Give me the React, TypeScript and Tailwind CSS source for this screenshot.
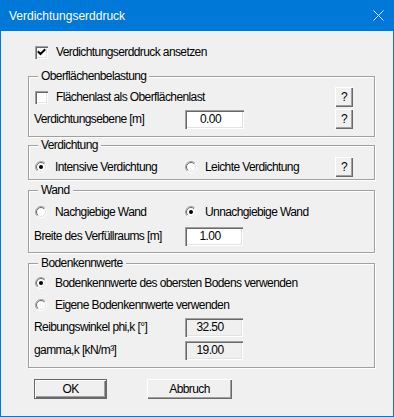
import React, { useId } from "react";

const txt = "font-['Liberation_Sans',Arial,sans-serif] text-[12px] leading-[14px] tracking-[-0.6px] text-black whitespace-nowrap";

function CheckBox({ checked }: { checked?: boolean }) {
  return (
    <div className="w-[13px] h-[13px] bg-white shrink-0 shadow-[inset_1px_1px_0_#a0a0a0,inset_2px_2px_0_#696969,inset_-1px_-1px_0_#ffffff,inset_-2px_-2px_0_#e3e3e3] flex items-center justify-center">
      {checked && (
        <svg width="13" height="13" viewBox="0 0 13 13">
          <path d="M3.5 6 L5.5 8 L9.5 4" fill="none" stroke="#000" strokeWidth="2" strokeLinecap="square" />
        </svg>
      )}
    </div>
  );
}

function Radio({ checked }: { checked?: boolean }) {
  const id = useId().replace(/:/g, "");
  return (
    <svg width="12" height="12" viewBox="0 0 12 12" className="shrink-0">
      <defs>
        <linearGradient id={`o${id}`} x1="0" y1="0" x2="1" y2="1">
          <stop offset="0.5" stopColor="#a0a0a0" />
          <stop offset="0.5" stopColor="#ffffff" />
        </linearGradient>
        <linearGradient id={`i${id}`} x1="0" y1="0" x2="1" y2="1">
          <stop offset="0.5" stopColor="#696969" />
          <stop offset="0.5" stopColor="#e3e3e3" />
        </linearGradient>
      </defs>
      <circle cx="6" cy="6" r="5.5" fill="none" stroke={`url(#o${id})`} strokeWidth="1" />
      <circle cx="6" cy="6" r="4.5" fill="#fff" stroke={`url(#i${id})`} strokeWidth="1" />
      {checked && <circle cx="6" cy="6" r="2" fill="#000" />}
    </svg>
  );
}

function Edit({ value, disabled, w = "w-[58px]" }: { value: string; disabled?: boolean; w?: string }) {
  return (
    <div
      className={`${w} h-[19px] shrink-0 flex items-center justify-center pr-[8px] shadow-[inset_1px_1px_0_#a0a0a0,inset_2px_2px_0_#696969,inset_-1px_-1px_0_#ffffff,inset_-2px_-2px_0_#e3e3e3] ${
        disabled ? "bg-[#f0f0f0]" : "bg-white"
      }`}
    >
      <span className={`${txt} ${disabled ? "text-[#6d6d6d]" : ""}`}>{value}</span>
    </div>
  );
}

function Btn({ label, w, isDefault }: { label: string; w: string; isDefault?: boolean }) {
  return (
    <div
      className={`${w} h-[20px] shrink-0 flex items-center justify-center bg-[#f0f0f0] ${
        isDefault
          ? "border border-[#696969] shadow-[inset_1px_1px_0_#ffffff,inset_-1px_-1px_0_#696969,inset_-2px_-2px_0_#a0a0a0]"
          : "shadow-[inset_1px_1px_0_#ffffff,inset_-1px_-1px_0_#696969,inset_-2px_-2px_0_#a0a0a0]"
      }`}
    >
      <span className={txt}>{label}</span>
    </div>
  );
}

function Group({ title, h, className = "", children }: { title: string; h: string; className?: string; children: React.ReactNode }) {
  return (
    <div
      className={`relative w-[347px] ${h} border border-[#a0a0a0] shadow-[inset_1px_1px_0_#ffffff,1px_1px_0_#ffffff] pl-[5px] pr-[21px] flex flex-col ${className}`}
    >
      <span className={`${txt} absolute left-[9px] -top-[8px] px-[3px] bg-[#f0f0f0]`}>{title}</span>
      {children}
    </div>
  );
}

export default function App() {
  return (
    <div className="w-[394px] h-[417px] flex flex-col overflow-hidden">
      <div className="h-[31px] shrink-0 bg-[#0078d7] flex items-center justify-between pl-[9px] pr-[10px]">
        <span className="font-['Liberation_Sans',Arial,sans-serif] text-[12px] leading-[14px] text-white">Verdichtungserddruck</span>
        <svg width="11" height="11" viewBox="0 0 11 11">
          <path d="M0.5 0.5 L10.5 10.5 M10.5 0.5 L0.5 10.5" stroke="#fff" strokeWidth="1" />
        </svg>
      </div>
      <div className="flex-1 bg-[#f0f0f0] border-x border-b border-[#0078d7] pl-[27px] flex flex-col">
        <div className="h-[20px] mt-[11px] flex items-center pl-[7px] gap-[8px]">
          <CheckBox checked />
          <span className={txt}>Verdichtungserddruck ansetzen</span>
        </div>

        <Group title="Oberflächenbelastung" h="h-[61px]" className="mt-[14px] pt-[10px]">
          <div className="h-[20px] flex items-center">
            <div className="flex-1 flex items-center gap-[8px] pl-[1px]">
              <CheckBox />
              <span className={txt}>Flächenlast als Oberflächenlast</span>
            </div>
            <Btn label="?" w="w-[18px]" />
          </div>
          <div className="h-[20px] mt-[2px] flex items-center">
            <span className={`${txt} w-[151px]`}>Verdichtungsebene [m]</span>
            <Edit value="0.00" w="w-[59px]" />
            <div className="flex-1" />
            <Btn label="?" w="w-[18px]" />
          </div>
        </Group>

        <Group title="Verdichtung" h="h-[35px]" className="mt-[8px] pt-[11px]">
          <div className="h-[19px] flex items-center">
            <div className="w-[151px] flex items-center gap-[8px] pl-[1px]">
              <Radio checked />
              <span className={txt}>Intensive Verdichtung</span>
            </div>
            <div className="flex-1 flex items-center gap-[8px]">
              <Radio />
              <span className={txt}>Leichte Verdichtung</span>
            </div>
            <Btn label="?" w="w-[18px]" />
          </div>
        </Group>

        <Group title="Wand" h="h-[63px]" className="mt-[10px] pt-[11px]">
          <div className="h-[20px] flex items-center">
            <div className="w-[151px] flex items-center gap-[8px] pl-[1px]">
              <Radio />
              <span className={txt}>Nachgiebige Wand</span>
            </div>
            <div className="flex-1 flex items-center gap-[8px]">
              <Radio checked />
              <span className={txt}>Unnachgiebige Wand</span>
            </div>
          </div>
          <div className="h-[20px] mt-[4px] flex items-center">
            <span className={`${txt} w-[151px]`}>Breite des Verfüllraums [m]</span>
            <Edit value="1.00" />
          </div>
        </Group>

        <Group title="Bodenkennwerte" h="h-[105px]" className="mt-[10px] pt-[9px]">
          <div className="h-[20px] flex items-center gap-[8px] pl-[1px]">
            <Radio checked />
            <span className={txt}>Bodenkennwerte des obersten Bodens verwenden</span>
          </div>
          <div className="h-[20px] mt-[2px] flex items-center gap-[8px] pl-[1px]">
            <Radio />
            <span className={txt}>Eigene Bodenkennwerte verwenden</span>
          </div>
          <div className="h-[20px] mt-[2px] flex items-center">
            <span className={`${txt} w-[151px]`}>Reibungswinkel phi,k [°]</span>
            <Edit value="32.50" disabled />
          </div>
          <div className="h-[20px] mt-[3px] flex items-center">
            <span className={`${txt} w-[151px]`}>gamma,k [kN/m³]</span>
            <Edit value="19.00" disabled />
          </div>
        </Group>

        <div className="mt-[11px] flex items-center pl-[6px]">
          <Btn label="OK" w="w-[73px]" isDefault />
          <div className="w-[40px]" />
          <Btn label="Abbruch" w="w-[85px]" />
        </div>
      </div>
    </div>
  );
}
